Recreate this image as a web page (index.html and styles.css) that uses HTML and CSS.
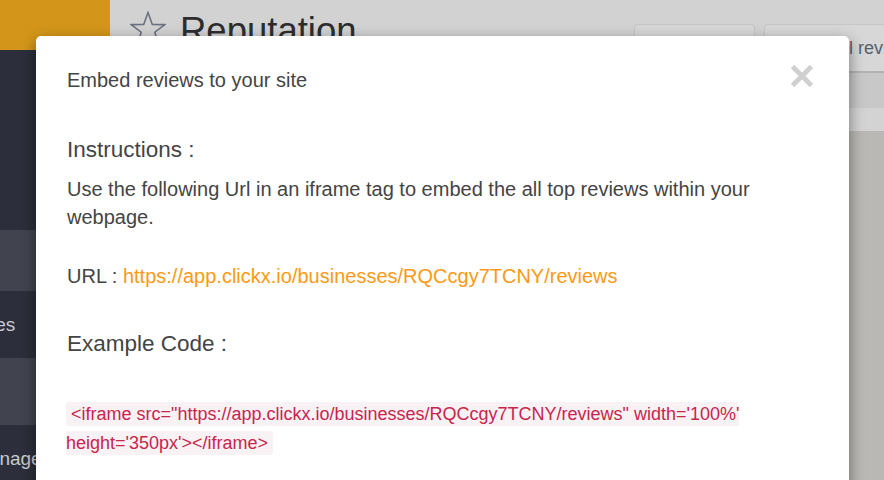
FILE: index.html
```html
<!DOCTYPE html>
<html lang="en">
<head>
<meta charset="utf-8">
<title>Reputation</title>
<link rel="stylesheet" href="styles.css">
</head>
<body>
<div class="app">
  <aside class="sidebar">
    <div class="brand"></div>
    <nav class="nav">
      <div class="nav-item h180"></div>
      <div class="nav-item active h60"></div>
      <div class="nav-item h67"><span>Sites</span></div>
      <div class="nav-item active h67"></div>
      <div class="nav-item h67"><span>Manage</span></div>
    </nav>
  </aside>
  <main class="main">
    <header class="page-header">
      <h1 class="page-title">
        <svg class="star" viewBox="0 0 36 36" width="36" height="36" aria-hidden="true">
          <polygon points="18,1.5 22.3,13.4 34.8,13.6 24.8,21.2 28.4,33.3 18,26.1 7.6,33.3 11.2,21.2 1.2,13.6 13.7,13.4" fill="none" stroke="#6b7180" stroke-width="1.6" stroke-linejoin="miter"/>
        </svg>
        <span>Reputation</span>
      </h1>
      <div class="actions">
        <button class="tab-btn first">Export</button>
        <button class="tab-btn second">Embed all reviews</button>
      </div>
    </header>
    <div class="tabs-bar"></div>
    <div class="sub-bar"></div>
    <div class="content"></div>
  </main>
</div>

<div class="modal" role="dialog">
  <div class="modal-header">
    <h4 class="modal-title">Embed reviews to your site</h4>
    <svg class="close" viewBox="0 0 24 24" width="24" height="24" aria-label="Close">
      <path d="M2.5 2.5 L21.5 21.5 M21.5 2.5 L2.5 21.5" stroke="#d0d0d0" stroke-width="4.8" stroke-linecap="butt"/>
    </svg>
  </div>
  <div class="modal-body">
    <h4 class="section-title">Instructions :</h4>
    <p class="text">Use the following Url in an iframe tag to embed the all top reviews within your webpage.</p>
    <p class="text url-line">URL : <a class="link" href="#">https://app.clickx.io/businesses/RQCcgy7TCNY/reviews</a></p>
    <h4 class="section-title example">Example Code :</h4>
    <p class="text code-line"><code class="code">&lt;iframe src="https://app.clickx.io/businesses/RQCcgy7TCNY/reviews" width='100%' height='350px'&gt;&lt;/iframe&gt;</code></p>
  </div>
</div>
</body>
</html>
```
FILE: styles.css
```css
html, body {
  margin: 0;
  padding: 0;
}
body {
  width: 884px;
  height: 480px;
  overflow: hidden;
  position: relative;
  font-family: "Liberation Sans", Arial, sans-serif;
  background: #b9b8b4;
}

.app {
  display: grid;
  grid-template-columns: 110px 774px;
  height: 480px;
}

/* sidebar */
.sidebar {
  background: #2c2e3b;
  overflow: hidden;
}
.brand {
  height: 50px;
  background: #d4961a;
}
.nav {
  display: flex;
  flex-direction: column;
}
.nav-item {
  display: flex;
  align-items: center;
  color: #c8c9cf;
  font-size: 19px;
  white-space: nowrap;
  background: #2c2e3b;
}
.nav-item span {
  margin-left: -27px;
}
.nav-item.active {
  background: #41434f;
}
.h180 { height: 180px; }
.h60 { height: 61px; }
.h67 { height: 67px; }

/* main */
.main {
  display: flex;
  flex-direction: column;
  background: #b9b8b4;
  overflow: hidden;
}
.page-header {
  height: 73px;
  flex-shrink: 0;
  background: #d2d2d2;
  display: flex;
  justify-content: space-between;
  align-items: stretch;
  padding-left: 20px;
}
.page-title {
  margin: 0;
  padding-top: 11px;
  font-size: 36.5px;
  line-height: 1.1;
  font-weight: 400;
  color: #2d2d2d;
  display: flex;
  align-items: flex-start;
  white-space: nowrap;
}
.star {
  margin-right: 14px;
  flex-shrink: 0;
}
.actions {
  display: flex;
  gap: 9px;
  padding-top: 24px;
  flex-shrink: 0;
}
.tab-btn {
  font-family: "Liberation Sans", Arial, sans-serif;
  font-size: 18px;
  color: #56606d;
  background: #d7d7d7;
  border: 1px solid #c6c6c6;
  border-bottom: 2px solid #b3b3b3;
  border-radius: 4px 4px 0 0;
  padding: 0 0 0 8px;
  text-align: left;
  white-space: nowrap;
  overflow: hidden;
}
.tab-btn.first { width: 121px; }
.tab-btn.second { width: 120px; border-right: none; border-radius: 4px 0 0 0; }

.tabs-bar {
  height: 35px;
  background: #c8c8c8;
  flex-shrink: 0;
}
.sub-bar {
  height: 23px;
  background: #d3d3d3;
  flex-shrink: 0;
}
.content {
  flex: 1;
  background: #b9b8b4;
}

/* modal */
.modal {
  position: absolute;
  top: 36px;
  left: 36px;
  width: 813px;
  height: 480px;
  box-sizing: border-box;
  background: #ffffff;
  border-radius: 5px;
  box-shadow: 0 5px 15px rgba(0, 0, 0, 0.45);
  padding: 0 35px 0 31px;
  color: #444444;
}
.modal-header {
  display: flex;
  justify-content: space-between;
  align-items: flex-start;
  padding-top: 31px;
}
.modal-title {
  margin: 0;
  font-size: 20px;
  line-height: 26px;
  font-weight: 400;
  color: #444444;
}
.close {
  margin-top: -3px;
  flex-shrink: 0;
}
.modal-body {
  margin-right: -4px;
}
.section-title {
  margin: 44px 0 0;
  font-size: 22.5px;
  line-height: 26px;
  font-weight: 400;
  color: #444444;
}
.section-title.example {
  margin-top: 41px;
}
.text {
  margin: 12px 0 0;
  font-size: 20px;
  line-height: 28px;
  color: #444444;
}
.url-line {
  margin-top: 31px;
}
.link {
  color: #fb9a14;
  text-decoration: none;
}
.code-line {
  margin-top: 42px;
  margin-left: -1px;
}
.code {
  font-family: "Liberation Sans", Arial, sans-serif;
  font-size: 18px;
  color: #c7254e;
  background: #f9f2f4;
  padding: 2px 5px;
  border-radius: 3px;
}
```
